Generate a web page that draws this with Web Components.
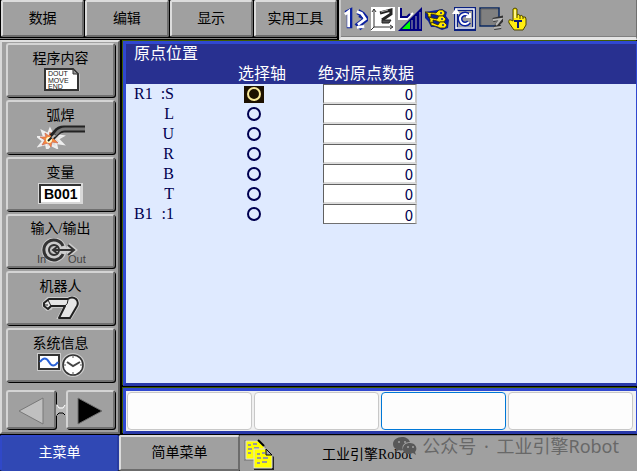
<!DOCTYPE html>
<html lang="zh-CN">
<head>
<meta charset="utf-8">
<title>原点位置</title>
<style>
  body {
    margin: 0;
    background: #000;
    font: 14px/18px "Liberation Serif", "Noto Sans CJK SC", sans-serif;
  }
</style>
</head>
<body>
<robot-pendant></robot-pendant>

<script>
;(function pendantLoaded(global){
  "use strict"


  const define = (name, html, setUp) => {
    const template = document.createElement("template")
    template.innerHTML = html

    global.customElements.define(name, class extends HTMLElement {
      constructor() {
        super()
        this.attachShadow({ mode: "open" })
        this.shadowRoot.appendChild(template.content.cloneNode(true))
      }

      connectedCallback() {
        if (setUp) {
          setUp.call(this, this.shadowRoot)
        }
      }
    })
  }


  // Raised grey key, used for the top menu and the bottom menu
  define("menu-key", `
    <style>
      :host { display: block; }
      button {
        display: block;
        box-sizing: border-box;
        width: 100%;
        height: 100%;
        margin: 0;
        padding: 0;
        border: 2px solid;
        border-color: #dcdcdc #6c6c6c #6c6c6c #dcdcdc;
        border-radius: 2px;
        background: #a0a0a0;
        color: #000;
        font: inherit;
      }
      :host([active]) button {
        border-color: #3048c8 #283ca0 #3048b4 #3048c8;
        background: #3048b4;
        color: #fff;
      }
    </style>
    <button type="button"><slot></slot></button>
  `)


  define("side-key", `
    <style>
      :host { display: block; }
      button {
        display: flex;
        flex-direction: column;
        align-items: center;
        justify-content: center;
        box-sizing: border-box;
        width: 100%;
        height: 100%;
        padding: 2px 0 0;
        border: 2px solid;
        border-color: #d4d4d4 #707070 #707070 #d4d4d4;
        border-radius: 3px;
        background: #a0a0a0;
        box-shadow: 1px 1px 0 #000;
        color: #000;
        font: inherit;
      }
    </style>
    <button type="button"><slot></slot><slot name="icon"></slot></button>
  `)


  define("side-menu", `
    <style>
      :host {
        display: flex;
        flex-direction: column;
        box-sizing: border-box;
        gap: 3px;
        padding: 1px 3px 3px 4px;
        border: 2px solid;
        border-color: #e0e0e0 #606060 #707070 #d8d8d8;
        background: #a0a0a0;
      }
      side-key { height: 54px; }
      svg { display: block; }
      .pager {
        display: grid;
        grid-template-columns: 1fr 10px 1fr;
        align-items: center;
        margin-top: auto;
      }
      .pager side-key { height: 39px; }
    </style>

    <side-key>程序内容
      <svg slot="icon" width="48" height="24" viewBox="0 0 48 24" aria-hidden="true">
        <path d="M7 0H36L43 6V23H7Z" fill="#c4c4c4"/>
        <path d="M8 1H36L41 6V22H8Z" fill="#fff" stroke="#333" stroke-width="2"/>
        <path d="M36 1V6H41Z" fill="#999" stroke="#333"/>
        <g font-family="Liberation Sans" font-size="7" fill="#222">
          <text x="11" y="8">DOUT</text><text x="11" y="15">MOVE</text><text x="11" y="21">END</text>
        </g>
      </svg>
    </side-key>

    <side-key>弧焊
      <svg slot="icon" width="48" height="24" viewBox="0 0 48 24" aria-hidden="true">
        <path d="M13 4L15 8L21 5L19 10L26 11L21 14L26 19L19 18L20 23L14 20L10 24L9 19L2 21L6 16L1 12L7 12L5 6L11 9Z" fill="#ddd" stroke="#eee" stroke-width="2"/>
        <path d="M13 7L15 11L20 10L17 14L21 18L15 17L14 22L11 18L5 20L8 15L3 12L9 12L8 8L12 11Z" fill="#f58a3c" stroke="#c65" stroke-width=".7"/>
        <circle cx="12" cy="15" r="3" fill="#fffbd0"/>
        <path d="M48 4H27Q22 4 19 8L15 12" fill="none" stroke="#222" stroke-width="7"/>
        <path d="M48 4H28Q23 4 20 8L17 11" fill="none" stroke="#777" stroke-width="3"/>
        <path d="M18 9L11 16" stroke="#222" stroke-width="2"/>
        <path d="M18 10L15 13" stroke="#bbb" stroke-width="2"/>
      </svg>
    </side-key>

    <side-key>变量
      <svg slot="icon" width="48" height="24" viewBox="0 0 48 24" aria-hidden="true">
        <path d="M1 22V1H46V22Z" fill="#d8d8d8"/>
        <path d="M3 20V3H43V20Z" fill="#fff"/>
        <path d="M3 21V3H44" fill="none" stroke="#333" stroke-width="2"/>
        <text x="7" y="17" font-family="Liberation Sans" font-size="14" font-weight="bold">B001</text>
      </svg>
    </side-key>

    <side-key>输入/输出
      <svg slot="icon" width="50" height="26" viewBox="0 0 50 26" aria-hidden="true">
        <circle cx="18" cy="12" r="9" fill="none" stroke="#ccc" stroke-width="7"/>
        <path d="M16 12H38M22 8L17 12L22 16M32 7L38 12L32 17" fill="none" stroke="#ccc" stroke-width="5"/>
        <path d="M27 8A10 10 0 1 0 27 16" fill="none" stroke="#333" stroke-width="3"/>
        <circle cx="18" cy="12" r="5" fill="none" stroke="#333" stroke-width="2"/>
        <path d="M17 12H38M22 8L17 12L22 16M32 7L38 12L32 17" fill="none" stroke="#333" stroke-width="2"/>
        <g font-family="Liberation Sans" font-size="11" fill="#444">
          <text x="1" y="25">In</text><text x="32" y="25">Out</text>
        </g>
      </svg>
    </side-key>

    <side-key>机器人
      <svg slot="icon" width="48" height="24" viewBox="0 0 48 24" aria-hidden="true">
        <path d="M11 2L31 2Q36 -1 40 3Q43 6 41 10L34 22H21L27 11H15L14 13L10 14L6 10V7Z" fill="#ccc" stroke="#ccc" stroke-width="2"/>
        <path d="M12 3H31Q35 0 39 3Q42 6 40 10L33 22H22L28 10H14L11 13L7 10V7Z" fill="#e6e6e6" stroke="#222" stroke-width="2" stroke-linejoin="round"/>
        <path d="M11 4L14 10M7 9L11 9M28 10Q31 8 31 4" fill="none" stroke="#222"/>
      </svg>
    </side-key>

    <side-key>系统信息
      <svg slot="icon" width="48" height="24" viewBox="0 0 48 24" aria-hidden="true">
        <path d="M0 0H24V18H0Z" fill="#ccc"/>
        <path d="M2 2H22V16H2Z" fill="#fff" stroke="#333" stroke-width="2"/>
        <path d="M3 9Q8 2 12 9T21 9" fill="none" stroke="#2a62d8" stroke-width="2"/>
        <circle cx="36" cy="12" r="11" fill="#fff" stroke="#ccc" stroke-width="2"/>
        <circle cx="36" cy="12" r="10" fill="#fff" stroke="#333" stroke-width="1.6"/>
        <path d="M30 9L36 13L43 9" fill="none" stroke="#444" stroke-width="2"/>
        <path d="M36 3V5M36 19V21M27 12H29M43 12H45" stroke="#555"/>
      </svg>
    </side-key>

    <div class="pager">
      <side-key aria-label="上一页">
        <svg slot="icon" width="28" height="28" viewBox="0 0 28 28" aria-hidden="true">
          <path d="M2 14L26 1V27Z" fill="#c0c0c0" stroke="#787878"/>
        </svg>
      </side-key>
      <svg width="10" height="14" viewBox="0 0 10 14" aria-hidden="true">
        <path d="M0 1L3 4H7L10 1V13L7 10H3L0 13Z" fill="#b8b8b8"/>
        <path d="M1 2L3 5H7L9 2" fill="none" stroke="#fff"/>
        <path d="M1 12L3 10H7L9 12" fill="none" stroke="#000"/>
      </svg>
      <side-key aria-label="下一页">
        <svg slot="icon" width="28" height="28" viewBox="0 0 28 28" aria-hidden="true">
          <path d="M2 1L26 14L2 27Z" fill="#000" stroke="#707070"/>
        </svg>
      </side-key>
    </div>
  `)


  define("status-icons", `
    <style>
      :host {
        display: flex;
        align-items: center;
        gap: 3px;
        box-sizing: border-box;
        padding-left: 3px;
        border: solid;
        border-width: 0 1px 3px 2px;
        border-color: #a0a0a0 #707070 #e4e4e4 #c8c8c8;
        background: #a0a0a0;
        box-shadow: inset 0 -1px 0 #808080;
      }
      svg { flex: none; }
    </style>

    <!-- robot number -->
    <svg width="24" height="24" viewBox="0 0 26 24" role="img" aria-label="R1">
      <g fill="none" stroke="#0a20a0">
        <path d="M2 6L6 4V22" stroke-width="6"/>
        <path d="M15 4L20 7L24 12L16 18L20 22" stroke-width="6"/>
      </g>
      <path d="M1 7L5 4V21" fill="none" stroke="#fff" stroke-width="3"/>
      <path d="M14 4L19 6L23 12L15 18M14 21L22 20" fill="none" stroke="#fff" stroke-width="3"/>
      <path d="M16 9L20 11" stroke="#0a20a0" stroke-width="2"/>
    </svg>
    <!-- joint coordinates -->
    <svg width="24" height="24" viewBox="0 0 24 24" role="img" aria-label="坐标">
      <path d="M0 0H24V24H0Z" fill="#fff"/>
      <path d="M3 2V20H21M1 5L3 2L5 5M19 18L22 20L19 22M3 20L0 23" fill="none" stroke="#333"/>
      <path d="M9 6L20 3L20 7L11 13" fill="none" stroke="#222" stroke-width="3"/>
      <path d="M11 13H20L18 16H11Z" fill="#555" stroke="#222"/>
      <path d="M10 5L17 3" stroke="#aaa"/>
    </svg>
    <!-- manual speed -->
    <svg width="24" height="24" viewBox="0 0 24 24" role="img" aria-label="速度">
      <path d="M0 24L24 0V24Z" fill="#000080"/>
      <path d="M4 22L12 14V22Z" fill="#0f0"/>
      <path d="M14 13V22M18 9V22M22 5V22" stroke="#aaa"/>
      <path d="M1 0V12H9L15 6" fill="none" stroke="#fff" stroke-width="2"/>
      <path d="M3 1V10H9L12 7" fill="none" stroke="#000080" stroke-width="2"/>
    </svg>
    <!-- security -->
    <svg width="24" height="24" viewBox="0 0 24 24" role="img" aria-label="安全">
      <path d="M0 5L12 3L17 2L22 5L21 9L24 13L23 21L17 23L10 20L6 20L3 14L0 11Z" fill="#0a20a0"/>
      <g fill="#ffe800" stroke="#332b00" stroke-width=".8">
        <path d="M0 5L11 6L14 3H18L20 6L18 9H14L11 8L6 7V10H3V7Z"/>
        <path d="M3 10L12 12L14 9H18L21 12L19 15H14L12 14L8 13V16H5V12Z"/>
        <path d="M6 15L13 18L15 15H19L22 18L20 21H15L13 20L6 18Z"/>
      </g>
      <g fill="#0a20a0"><circle cx="16" cy="6" r="1"/><circle cx="17" cy="12" r="1"/><circle cx="18" cy="18" r="1"/></g>
    </svg>
    <!-- cycle -->
    <svg width="24" height="24" viewBox="0 0 24 24" role="img" aria-label="循环">
      <path d="M4 2H22V22H4Z" fill="none" stroke="#0a2080" stroke-width="4"/>
      <path d="M4 22V2H22V21H4" fill="none" stroke="#fff" stroke-width="1.5"/>
      <path d="M0 7L4 1L8 7Z" fill="#fff"/>
      <path d="M17 9A5 5 0 1 0 17 15" fill="none" stroke="#0a20a0" stroke-width="5"/>
      <path d="M17 9A5 5 0 1 0 17 15M18 6V10H14" fill="none" stroke="#fff" stroke-width="2"/>
    </svg>
    <!-- execution -->
    <svg width="24" height="24" viewBox="0 0 24 24" role="img" aria-label="停止">
      <path d="M1 1H20V19H1Z" fill="#808080" stroke="#0a2860" stroke-width="1.5"/>
      <path d="M2 18V2H19" fill="none" stroke="#666"/>
      <path d="M14 13L22 11L22 14L17 19M15 21L22 20" fill="none" stroke="#333" stroke-width="4"/>
      <path d="M14 13L22 12L17 18M15 21L22 20" fill="none" stroke="#b8b8b8" stroke-width="2"/>
    </svg>
    <!-- teach mode -->
    <svg width="24" height="24" viewBox="0 0 24 24" role="img" aria-label="示教">
      <path d="M7 14V2Q9 0 11 2V8Q13 6 14 9Q16 7 17 10Q20 9 20 12V18L17 23H8L3 16Q2 12 5 13Z" fill="#ffee10" stroke="#4c4500"/>
      <path d="M11 8V11M14 9V12M17 10V12" stroke="#4c4500"/>
      <path d="M9 3V11" stroke="#fff"/>
      <path d="M8 14H16M12 14V21" stroke="#0a1c78" stroke-width="2"/>
    </svg>
  `)


  define("axis-table", `
    <style>
      :host {
        display: block;
        color: #000050;
        font-size: 16px;
        line-height: 20px;
        background: #dfeaff;
      }
      h1, th {
        margin: 0;
        font: inherit;
      }
      h1 {
        padding-left: 8px;
        background: #283090;
        color: #fff;
      }
      table {
        width: 100%;
        border-collapse: collapse;
        table-layout: fixed;
      }
      thead { background: #283090; color: #fff; }
      th, td { padding: 0; white-space: nowrap; }
      td { height: 20px; }
      col.axis { width: 48px; }
      col.pick { width: 112px; }
      col.space { width: 32px; }
      th.axis, th.pick { text-align: right; }
      th.value { text-align: left; }
      td.value { padding-left: 5px; }
      .named {
        display: inline-block;
        width: 40px;
        text-align-last: justify;
      }
      label {
        display: grid;
        place-content: center;
        width: 20px;
        height: 17px;
        margin: 0 22px 0 auto;
      }
      label.current { background: #1c1000; color: #f8e898; }
      label input {
        appearance: none;
        box-sizing: border-box;
        width: 14px;
        height: 14px;
        margin: 0;
        border: 2px solid;
        border-radius: 50%;
        color: inherit;
      }
      .value input {
        display: block;
        box-sizing: border-box;
        width: 94px;
        height: 20px;
        margin: 0;
        padding: 0 2px;
        border: solid;
        border-width: 1px 2px 2px 1px;
        border-color: #606060 #c8c8c8 #dcdcdc #606060;
        background: #fff;
        color: #000050;
        font: 15px/16px "Noto Sans CJK SC", sans-serif;
        text-align: right;
      }
      tr:last-child .value input { border-bottom: 1px solid #707070; }
    </style>

    <h1>原点位置</h1>
    <table>
      <colgroup><col class="axis"><col class="pick"><col class="space"><col></colgroup>
      <thead>
        <tr><th></th><th class="pick">选择轴</th><th></th><th class="value">绝对原点数据</th></tr>
      </thead>
      <tbody></tbody>
    </table>
  `, function fillRows(root) {
    const axes = ["R1 :S", "L", "U", "R", "B", "T", "B1 :1"]

    root.querySelector("tbody").innerHTML = axes.map((axis, index) => `
      <tr>
        <th class="axis" scope="row">${axis.length > 1 ? `<span class="named">${axis}</span>` : axis}</th>
        <td><label class="${index ? "" : "current"}"><input type="checkbox" aria-label="${axis}"></label></td>
        <td></td>
        <td class="value"><input type="text" inputmode="numeric" value="0" aria-label="${axis}"></td>
      </tr>`).join("")
  })


  define("function-keys", `
    <style>
      :host {
        display: grid;
        grid-template-columns: repeat(4, 1fr);
        gap: 2px;
        padding: 1px 3px 1px 1px;
        background: #f0f0f0;
      }
      button {
        height: 38px;
        padding: 0;
        border: 1px solid #c8c8c8;
        border-radius: 4px;
        background: #fdfdfd;
      }
      .focused { border-color: #0078d7; }
    </style>
    <button type="button" aria-label="F1"></button>
    <button type="button" aria-label="F2"></button>
    <button type="button" aria-label="F3" class="focused"></button>
    <button type="button" aria-label="F4"></button>
  `)


  define("message-line", `
    <style>
      :host {
        position: relative;
        display: flex;
        align-items: center;
        gap: 48px;
        padding: 2px 0 0 4px;
        border-top: 1px solid #808080;
        background: #a0a0a0;
      }
      .pages { flex: none; }
      .stamp {
        position: absolute;
        top: -3px;
        right: 18px;
        display: flex;
        align-items: center;
        gap: 5px;
        color: #686868;
        font: 18px/26px "Noto Sans", "Noto Sans CJK SC", sans-serif;
        white-space: nowrap;
      }
      .dot { padding: 0 3px; }
    </style>

    <svg class="pages" width="30" height="32" viewBox="0 0 30 32" aria-hidden="true">
      <path d="M0 1H16L22 8V22H0Z" fill="#888"/>
      <path d="M2 2H14L20 8V20H2Z" fill="#ff0" stroke="#ddd"/>
      <path d="M14 1L20 7" stroke="#000" stroke-width="2"/>
      <path d="M4 6H7M9 5H13M4 10H8M10 9H15M4 14H7" stroke="#999" stroke-width="2"/>
      <path d="M10 11H23L30 18V31H10Z" fill="#222"/>
      <path d="M10 10H22L28 16V29H10Z" fill="#ff0" stroke="#ddd"/>
      <path d="M22 10V16H28Z" fill="#aaa" stroke="#000"/>
      <path d="M13 15H16M18 14H21M13 19H17M19 19H24M13 24H16M18 23H23" stroke="#999" stroke-width="2"/>
    </svg>
    <span>工业引擎Robot</span>

    <div class="stamp">
      <svg width="24" height="20" viewBox="0 0 24 20" aria-hidden="true">
        <path d="M9 1C4 1 0 4 0 8C0 10 1 12 3 13L2 16L6 14Q8 15 10 14C8 9 12 6 17 6C16 3 13 1 9 1Z" fill="#585858"/>
        <path d="M17 7C13 7 10 9 10 13S13 18 17 18L20 17L23 19L22 16C25 13 23 7 17 7Z" fill="#585858"/>
        <g fill="#a0a0a0"><circle cx="6" cy="6" r="1"/><circle cx="12" cy="6" r="1"/><circle cx="15" cy="11" r="1"/><circle cx="20" cy="11" r="1"/></g>
      </svg>
      <span>公众号 <span class="dot">·</span> 工业引擎Robot</span>
    </div>
  `)


  define("robot-pendant", `
    <style>
      :host {
        display: grid;
        grid-template-rows: 40px 1fr 36px;
        min-height: 100vh;
        background: #000;
      }
      .top, .middle, .bottom { display: grid; }
      .top { grid-template-columns: 337px 1fr; gap: 2px; }
      .menu {
        display: grid;
        grid-template-columns: repeat(4, 1fr);
        gap: 1px;
        padding: 0 0 1px 1px;
        margin-bottom: 1px;
        border-bottom: 1px solid #808080;
      }
      .middle { grid-template-columns: 120px 1fr; gap: 3px; padding-bottom: 1px; }
      .bottom { grid-template-columns: 119px 121px 1fr; }
      .work { display: grid; grid-template-rows: 1fr auto; gap: 2px; }
      .frame {
        border: 3px solid #3048d0;
        border-right-width: 1px;
        border-bottom-color: #2838a8;
        box-shadow: -1px -1px 0 #405c00;
      }
      .frame.screen { margin-top: 1px; background: #dfeaff; }
    </style>

    <nav class="top">
      <div class="menu">
        <menu-key>数据</menu-key>
        <menu-key>编辑</menu-key>
        <menu-key>显示</menu-key>
        <menu-key>实用工具</menu-key>
      </div>
      <status-icons></status-icons>
    </nav>
    <div class="middle">
      <side-menu></side-menu>
      <main class="work">
        <div class="frame screen"><axis-table></axis-table></div>
        <div class="frame"><function-keys></function-keys></div>
      </main>
    </div>
    <div class="bottom">
      <menu-key active>主菜单</menu-key>
      <menu-key>简单菜单</menu-key>
      <message-line></message-line>
    </div>
  `)

})(window)
</script>
</body>
</html>
